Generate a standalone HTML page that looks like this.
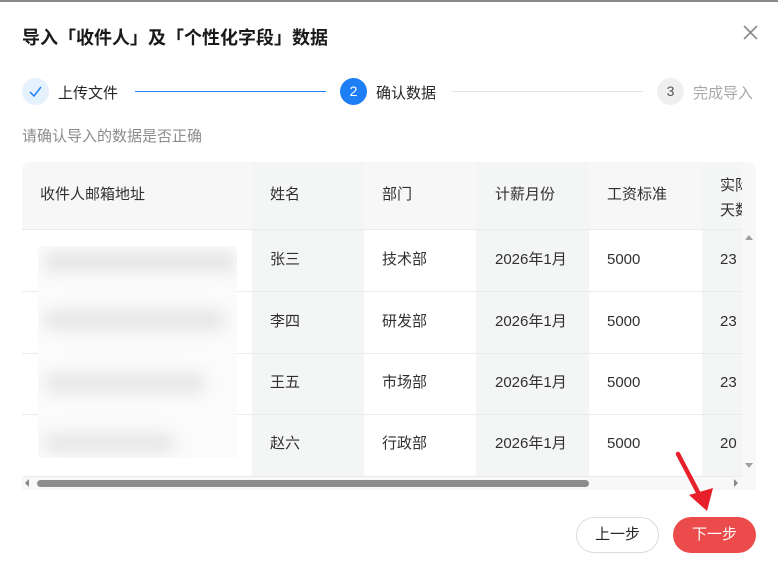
<!DOCTYPE html>
<html><head><meta charset="utf-8"><style>
*{margin:0;padding:0;box-sizing:border-box}
body{width:778px;height:570px;background:#fff;font-family:"Liberation Sans","Noto Sans CJK SC",sans-serif;position:relative;overflow:hidden;color:#262626}
.a{position:absolute;white-space:nowrap}
.t{font-size:15px;color:#303030;line-height:20px}
.sh{background:#f4f5f5}
.hl{position:absolute;left:22px;width:720px;height:1px;background:#ebebeb}
</style></head><body>
<div class="a" style="left:0;top:0;width:778px;height:2px;background:#8a8a8a"></div>
<div class="a" style="left:22px;top:24px;font-size:18px;font-weight:bold;color:#1a1a1a">导入「收件人」及「个性化字段」数据</div>
<svg class="a" style="left:742px;top:24px" width="17" height="17"><path d="M2 2L15 15M15 2L2 15" stroke="#8a8a8a" stroke-width="1.6"/></svg>

<div class="a" style="left:22px;top:78px;width:27px;height:27px;border-radius:50%;background:#e6f1fe"></div>
<svg class="a" style="left:28px;top:84px" width="15" height="15"><path d="M2 8L6 12L13 3" stroke="#1e7ef5" stroke-width="1.5" fill="none"/></svg>
<div class="a" style="left:58px;top:82px;font-size:15px;color:#262626">上传文件</div>
<div class="a" style="left:135px;top:91px;width:191px;height:1px;background:#1e7ef5"></div>
<div class="a" style="left:340px;top:78px;width:27px;height:27px;border-radius:50%;background:#1e7ef5;color:#fff;font-size:14px;text-align:center;line-height:27px">2</div>
<div class="a" style="left:376px;top:82px;font-size:15px;color:#262626">确认数据</div>
<div class="a" style="left:452px;top:91px;width:191px;height:1px;background:#e4e4e4"></div>
<div class="a" style="left:657px;top:78px;width:27px;height:27px;border-radius:50%;background:#efefef;color:#555;font-size:14px;text-align:center;line-height:27px">3</div>
<div class="a" style="left:693px;top:82px;font-size:15px;color:#a8a8a8">完成导入</div>
<div class="a" style="left:22px;top:125px;font-size:15px;color:#8c8c8c">请确认导入的数据是否正确</div>

<div class="a" style="left:22px;top:162px;width:734px;height:328px;border-radius:8px 8px 0 0;overflow:hidden;background:#fff">
 <div class="a" style="left:0;top:0;width:734px;height:67px;background:#f7f7f7"></div>
 <div class="a sh" style="left:230px;top:0;width:112px;height:314px"></div>
 <div class="a sh" style="left:454px;top:0;width:113px;height:314px"></div>
 <div class="a sh" style="left:680px;top:0;width:40px;height:314px"></div>
 <div class="a" style="left:720px;top:67px;width:14px;height:247px;background:#f8f8f8"></div>
 <div class="a" style="left:0;top:314px;width:734px;height:14px;background:#f8f8f8"></div>
</div>
<div class="hl" style="top:229px"></div>
<div class="hl" style="top:291px"></div>
<div class="hl" style="top:353px"></div>
<div class="hl" style="top:414px"></div>
<div class="hl" style="top:476px"></div>
<div class="a t" style="left:40px;top:185px">收件人邮箱地址</div>
<div class="a t" style="left:270px;top:185px">姓名</div>
<div class="a t" style="left:382px;top:185px">部门</div>
<div class="a t" style="left:495px;top:185px">计薪月份</div>
<div class="a t" style="left:607px;top:185px">工资标准</div>
<div class="a t" style="left:720px;top:173px;width:22px;overflow:hidden;line-height:25px">实际出<br>天数</div>

<div class="a" style="left:38px;top:246px;width:199px;height:212px;background:#fbfbfb;overflow:hidden">
 <div class="a" style="left:8px;top:8px;width:188px;height:16px;background:#e0e0e0;filter:blur(8px)"></div>
 <div class="a" style="left:8px;top:66px;width:178px;height:16px;background:#e0e0e0;filter:blur(8px)"></div>
 <div class="a" style="left:8px;top:129px;width:158px;height:16px;background:#e2e2e2;filter:blur(8px)"></div>
 <div class="a" style="left:8px;top:189px;width:128px;height:16px;background:#e2e2e2;filter:blur(8px)"></div>
</div>

<div class="a t" style="left:270px;top:250px">张三</div><div class="a t" style="left:382px;top:250px">技术部</div><div class="a t" style="left:495px;top:250px">2026年1月</div><div class="a t" style="left:607px;top:250px">5000</div><div class="a t" style="left:720px;top:250px">23</div>
<div class="a t" style="left:270px;top:312px">李四</div><div class="a t" style="left:382px;top:312px">研发部</div><div class="a t" style="left:495px;top:312px">2026年1月</div><div class="a t" style="left:607px;top:312px">5000</div><div class="a t" style="left:720px;top:312px">23</div>
<div class="a t" style="left:270px;top:373px">王五</div><div class="a t" style="left:382px;top:373px">市场部</div><div class="a t" style="left:495px;top:373px">2026年1月</div><div class="a t" style="left:607px;top:373px">5000</div><div class="a t" style="left:720px;top:373px">23</div>
<div class="a t" style="left:270px;top:434px">赵六</div><div class="a t" style="left:382px;top:434px">行政部</div><div class="a t" style="left:495px;top:434px">2026年1月</div><div class="a t" style="left:607px;top:434px">5000</div><div class="a t" style="left:720px;top:434px">20</div>

<svg class="a" style="left:742px;top:232px" width="14" height="240"><path d="M3 8L7 3L11 8Z" fill="#a0a0a0"/><path d="M3 231L7 236L11 231Z" fill="#a0a0a0"/></svg>
<svg class="a" style="left:22px;top:476px" width="720" height="14"><path d="M7 3L3 7L7 11Z" fill="#888"/><path d="M712 3L716 7L712 11Z" fill="#888"/></svg>
<div class="a" style="left:37px;top:480px;width:552px;height:7px;border-radius:4px;background:#8c8c8c"></div>

<div class="a" style="left:576px;top:517px;width:83px;height:36px;border:1px solid #dcdcdc;border-radius:18px;text-align:center;line-height:34px;font-size:15px;color:#262626">上一步</div>
<div class="a" style="left:673px;top:517px;width:83px;height:36px;border-radius:18px;background:#eb4b4b;text-align:center;line-height:36px;font-size:15px;color:#fff">下一步</div>
<svg class="a" style="left:670px;top:448px" width="50" height="66"><path d="M8 6L30 48" stroke="#e8202a" stroke-width="4.5" stroke-linecap="round"/><path d="M37 63L19 47L43 40Z" fill="#e8202a"/></svg>
</body></html>
